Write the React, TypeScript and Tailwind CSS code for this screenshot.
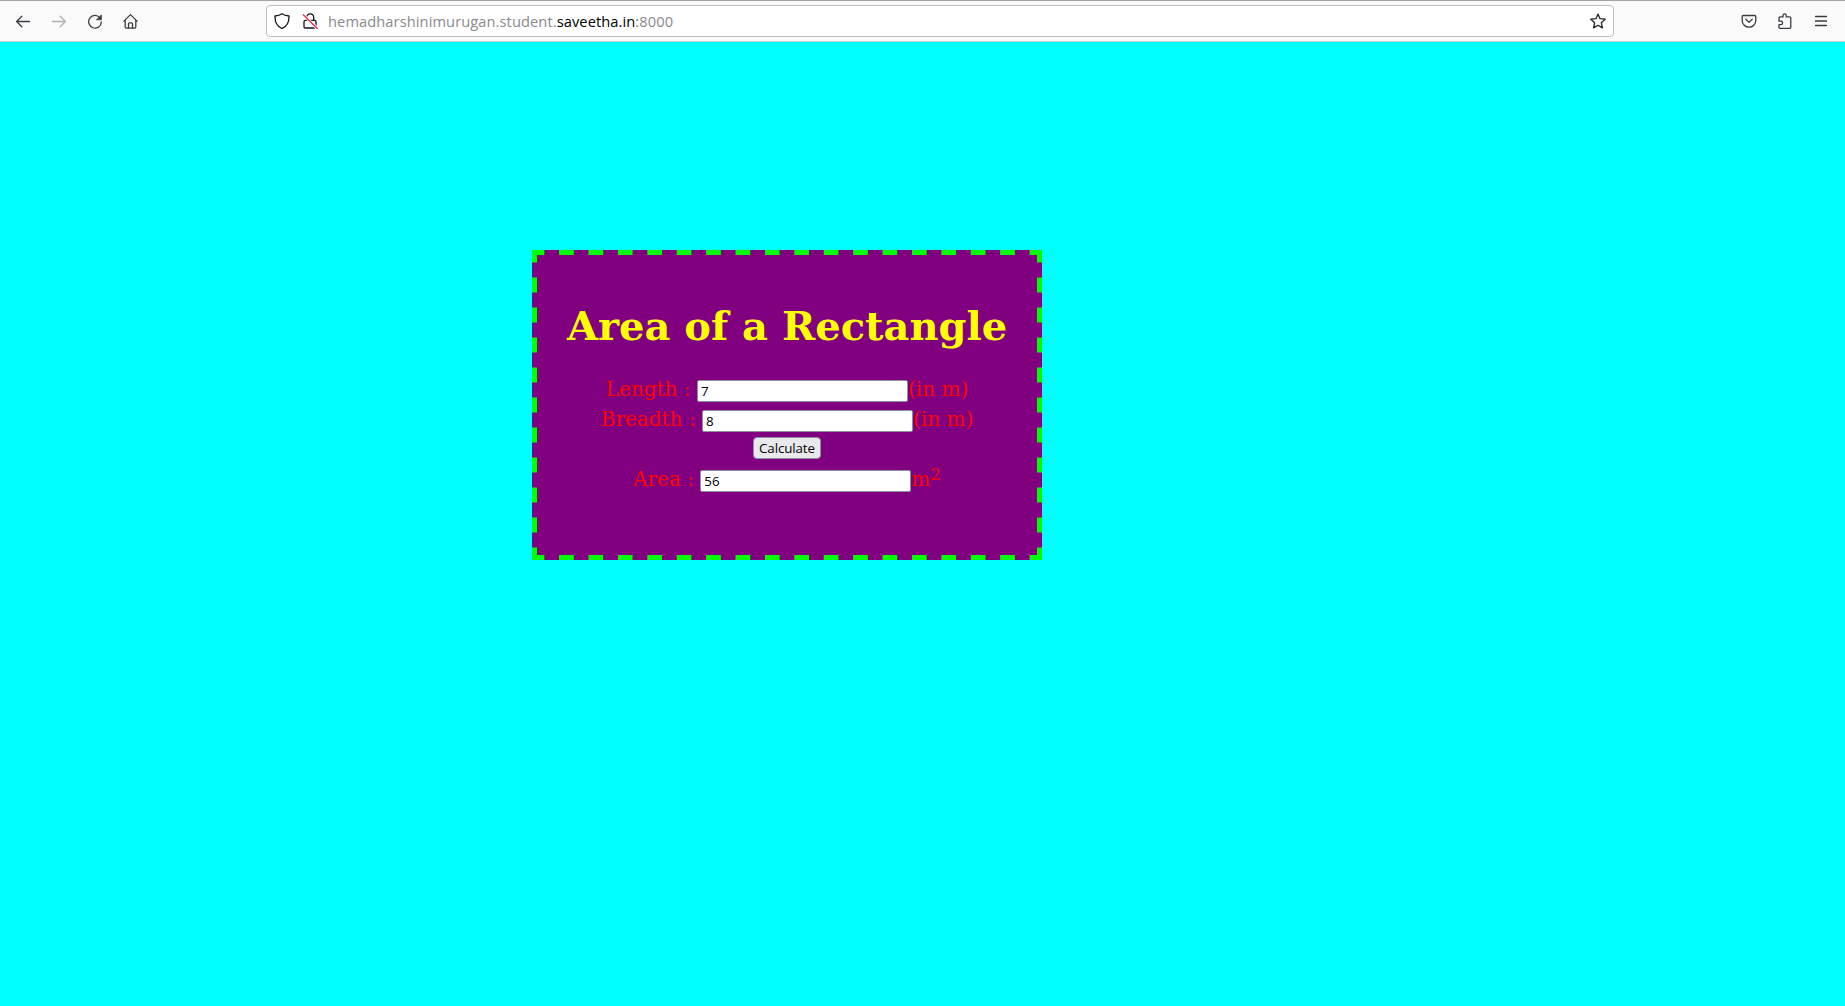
import type { ReactNode } from "react";

function Icon({ children, className = "" }: { children: ReactNode; className?: string }) {
  return (
    <svg
      viewBox="0 0 16 16"
      className={`block h-4 w-4 shrink-0 ${className}`}
      fill="none"
      stroke="currentColor"
      strokeWidth="1.3"
      strokeLinecap="round"
      strokeLinejoin="round"
    >
      {children}
    </svg>
  );
}

function Toolbar() {
  return (
    <header className="flex h-[42px] shrink-0 items-center border-t border-b border-t-[#a5a4a6] border-b-[#cccccc] bg-[#fafafa] text-[#3c3b42]">
      <nav className="flex w-[266px] shrink-0 gap-5 pl-[15px]">
        <Icon>
          <path d="M14.5 8.5H1.8M6.8 3.3L1.6 8.5l5.2 5.2" />
        </Icon>
        <Icon className="text-[#b2b1b5]">
          <path d="M1.5 8.5h12.7M9.2 3.3l5.2 5.2-5.2 5.2" />
        </Icon>
        <Icon>
          <path d="M12.9 4.8A6.3 6.3 0 1 0 14.3 9" />
          <path d="M14.4 2.2v4.6H9.8z" fill="currentColor" strokeWidth="0.8" />
        </Icon>
        <Icon>
          <path d="M.9 8.1L7.500 1.600l6.600 6.500M2.200 7v6.800c0 .8.5 1.300 1.200 1.300h8.200c.7 0 1.200-.5 1.200-1.300V7" />
          <path d="M5.500 15v-4.200c0-.7.4-1 1-1h2c.6 0 1 .3 1 1V15" />
        </Icon>
      </nav>
      <div className="flex h-8 w-[1348px] shrink-0 items-center rounded-[4px] border border-[#bfbfc2] bg-white pl-[7px] pr-[7px] text-[#15141a]">
        <Icon>
          <path d="M8 .8c2 1.500 4.200 2 7 2.200C15.200 9 13 13.500 8 15.500 3 13.500.8 9 1 3 3.800 2.800 6 2.300 8 .8z" />
        </Icon>
        <Icon className="ml-3">
          <path d="M4.700 7V4.500C4.700 2.300 6 .9 8.200 .9s3.500 1.400 3.500 3.600V7M3.300 7.400h9.400c.8 0 1.300.5 1.300 1.300v5c0 .8-.5 1.300-1.300 1.300H3.300C2.500 15 2 14.500 2 13.700v-5c0-.8.5-1.300 1.300-1.300z" />
          <path d="M1.300 1.800l14 13.700" stroke="white" strokeWidth="3" />
          <path d="M1.300 1.800l14 13.700" stroke="#e22850" />
        </Icon>
        <div className="ml-[10px] w-[346px] whitespace-nowrap font-['Open_Sans','Noto_Sans',sans-serif] text-[14.67px] leading-5 tracking-[0.08px] text-[#8a898c]">
          hemadharshinimurugan.student.<span className="text-black">saveetha.in</span>:8000
        </div>
        <Icon className="ml-auto text-[#252429]">
          <path d="M8 1.100l2 4.600 5.200.5-3.900 3.500 1.100 5.200L8 12.300l-4.400 2.600 1.100-5.200L.8 6.200 6 5.700z" />
        </Icon>
      </div>
      <div className="ml-auto flex gap-5 pr-4">
        <Icon>
          <path d="M2.200 2.500h11.600c.6 0 1 .4 1 1v3.900a6.800 6.800 0 0 1-13.600 0V3.500c0-.6.4-1 1-1z" />
          <path d="M4.800 6.300L8 9.400l3.200-3.100" />
        </Icon>
        <Icon>
          <path d="M2 6.500V5c0-.7.4-1.100 1.100-1.100h2.900V2.600c0-1 .6-1.700 1.600-1.700s1.600.7 1.600 1.700v1.300h3.500c.7 0 1.100.4 1.100 1.100v9.200c0 .7-.4 1.100-1.100 1.100H3.100c-.7 0-1.100-.4-1.100-1.100v-2.500h1.900c1.100 0 1.700-.7 1.700-1.700S5 8.200 3.900 8.200H2z" />
        </Icon>
        <Icon>
          <path d="M2.500 3.500h11M2.500 8h11M2.500 12.500h11" />
        </Icon>
      </div>
    </header>
  );
}

function Field({
  label,
  value,
  unit,
  className = "",
}: {
  label: string;
  value: string;
  unit: ReactNode;
  className?: string;
}) {
  return (
    <div className={`flex items-start justify-center ${className}`}>
      <label className="mr-[6.4px] leading-5">{label} :</label>
      <input
        readOnly
        value={value}
        className="mt-px h-[22px] w-[211px] rounded-[2px] border border-[#8f8f9d] bg-white px-[3px] font-['Open_Sans','Noto_Sans',sans-serif] text-[13.33px] leading-4 text-black outline-none"
      />
      <span className="leading-5">{unit}</span>
    </div>
  );
}

export default function App() {
  return (
    <div className="flex h-[1006px] w-[1845px] flex-col overflow-hidden bg-[#00ffff]">
      <Toolbar />
      <main className="pt-[208px] pl-[532px]">
        <form
          className="flex h-[310px] w-[510px] flex-col bg-[#800080] bg-[image:linear-gradient(90deg,#0f0_50%,transparent_50%),linear-gradient(90deg,#0f0_50%,transparent_50%),linear-gradient(#0f0_50%,transparent_50%),linear-gradient(#0f0_50%,transparent_50%)] [background-position:-2.35px_0,-2.35px_305px,0_-2.5px,505px_-2.5px] [background-repeat:repeat-x,repeat-x,repeat-y,repeat-y] [background-size:29.41px_5px,29.41px_5px,5px_30px,5px_30px] font-['DejaVu_Serif',serif] text-[20px] text-[#ff0000]"
          onSubmit={(event) => event.preventDefault()}
        >
          <h1 className="mt-[52px] text-center text-[40px] leading-[48px] font-bold whitespace-nowrap text-[#ffff00]">
            Area of a Rectangle
          </h1>
          <Field className="mt-[29px] h-[30px]" label="Length" value="7" unit="(in m)" />
          <Field className="h-[30px]" label="Breadth" value="8" unit="(in m)" />
          <button
            type="button"
            className="mt-[-2px] h-[22px] w-[68px] self-center rounded-[4px] border border-[#8f8f9d] bg-[#e9e9ed] font-['Open_Sans','Noto_Sans',sans-serif] text-[13.33px] leading-4 tracking-[-0.1px] text-black"
          >
            Calculate
          </button>
          <Field
            className="mt-[10px] h-[30px]"
            label="Area"
            value="56"
            unit={
              <>
                m<sup className="text-[16.67px] leading-none top-[-6.5px]">2</sup>
              </>
            }
          />
        </form>
      </main>
    </div>
  );
}
